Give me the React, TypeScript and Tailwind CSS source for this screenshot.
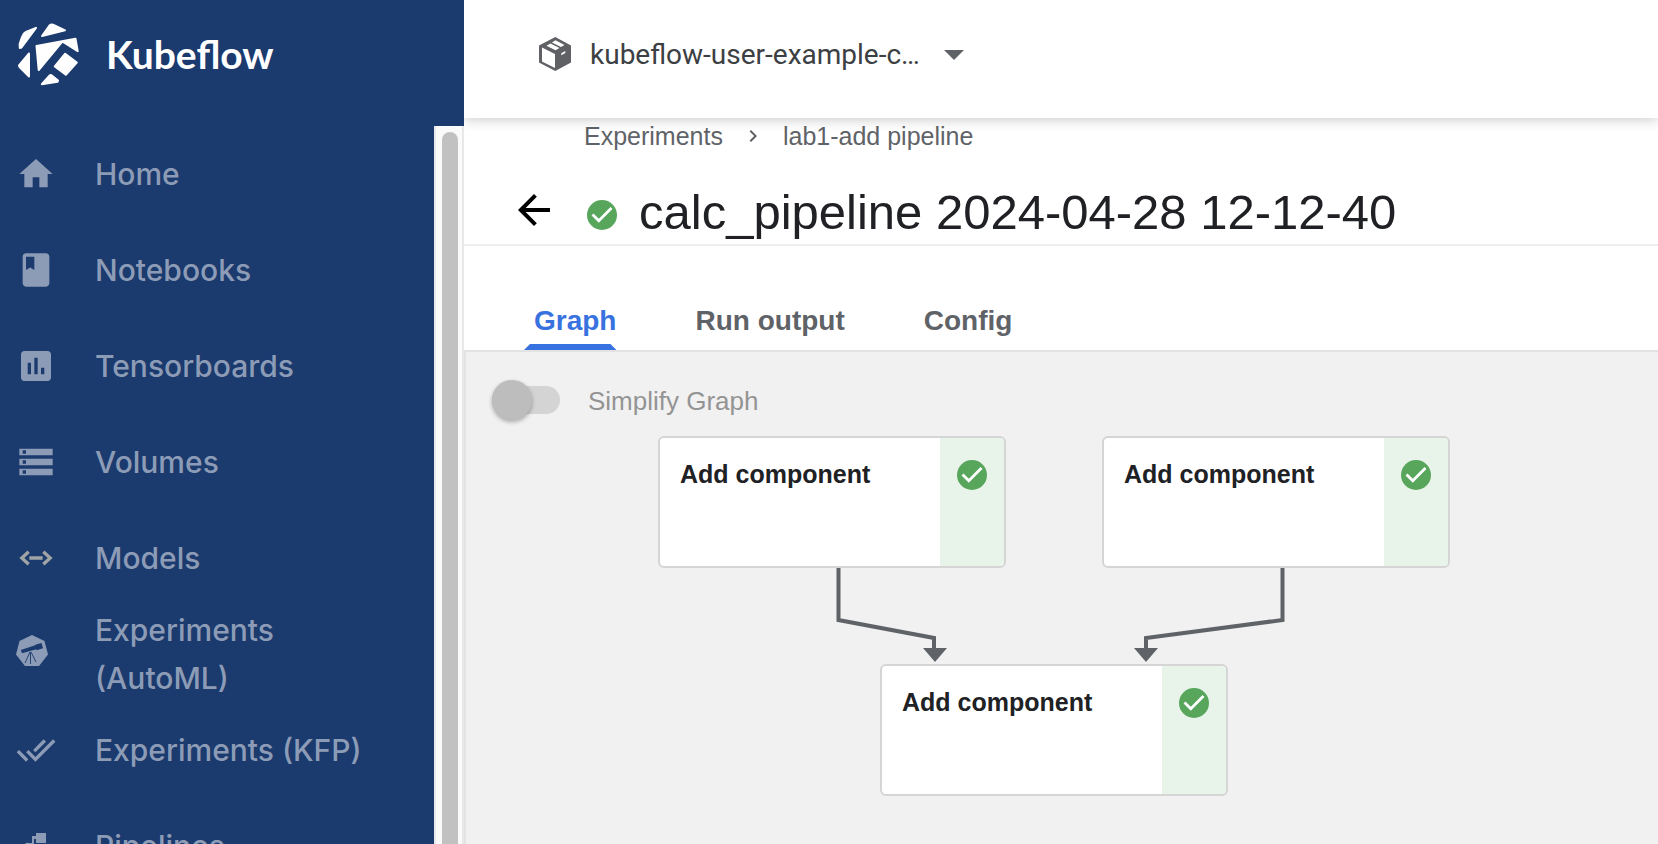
import type { ReactNode } from "react";
import { MdHome, MdBook, MdAssessment, MdStorage, MdDoneAll, MdArrowBack, MdChevronRight, MdArrowDropDown } from "react-icons/md";

function KubeflowMark() {
  return (
    <svg viewBox="0 0 62 64" className="h-16 w-[62px] shrink-0" fill="#fff" stroke="#fff" strokeWidth="2" strokeLinejoin="round" aria-hidden="true">
      <path d="M2.800 26 2.600 22 5 15Q6 11.500 9 10L19 5.800 4.500 25.500z" />
      <path d="M25 14 32.500 3.500Q34 2 36 2.600L48 8.300z" />
      <path d="M19.500 24 58.500 16.700 60.700 29.200 45.300 19.500 21.700 48z" />
      <path d="M2 43.500 12 31.500V54.500L2.500 45z" />
      <path d="M48.200 31.700 59.800 40.500 48.800 52.800 37.800 44.500z" />
      <path d="M24.800 62.200 32.500 53.600Q33.500 52.700 34.500 53.200L41 58.500 40.500 59.800z" />
    </svg>
  );
}

function ModelsIcon() {
  return (
    <svg viewBox="0 0 24 24" className="size-10" fill="none" stroke="#9fa4a4" strokeWidth="2" aria-hidden="true">
      <path d="M7.600 8.200 3.500 12l4.100 3.800M16.400 8.200l4.100 3.800-4.100 3.800M8 12h8" />
    </svg>
  );
}

function KatibIcon() {
  return (
    <svg viewBox="0 0 32 32" className="size-8" aria-hidden="true">
      <path fill="currentColor" d="M16 0 28.500 6 32 19.500 23 31H9L0 19.500 3.500 6z" />
      <path fill="#1b3a6e" d="M4.800 15 18.500 10.500 20 9.500 25.500 8 27 13.200 21.500 15 19.500 14.500 6 18.200z" />
      <path fill="none" stroke="#1b3a6e" strokeWidth="0.900" d="M14 17 9 28M14.500 17v12M15 17l5 10" />
    </svg>
  );
}

function PipelinesIcon() {
  return (
    <svg viewBox="0 0 40 40" className="size-10" fill="currentColor" aria-hidden="true">
      <path d="M20 7h10v10H20v-4h-2v14h2v-4h10v10H20v-4h-4V18h-1a5 5 0 1 1-2-1h3v-7h4z" />
    </svg>
  );
}

function PackageIcon() {
  return (
    <svg viewBox="0 0 32 34" className="h-[34px] w-8" fill="#5f6164" aria-hidden="true">
      <path
        fillRule="evenodd"
        d="M16.300 0 32 8.500v17L16.300 34 0 25.500v-17zM3 10.500v14L16 31V17zM7.500 8.700l9 4.500 4-2.200-9-4.500zM13 5.500l9 4.500 3.500-2-9-4.800zM22.300 16.300v2l4-2.200v-2z"
      />
    </svg>
  );
}

function Success() {
  return (
    <svg viewBox="0 0 30 30" className="size-[30px] shrink-0" role="img" aria-label="Succeeded">
      <circle cx="15" cy="15" r="15" fill="#57a65c" />
      <path d="M5.500 14.500 11.800 20.800 24.500 8" fill="none" stroke="#fff" strokeWidth="2.800" />
    </svg>
  );
}

const navItems: { label: string; icon: ReactNode; custom?: boolean }[] = [
  { label: "Home", icon: <MdHome className="size-10" /> },
  { label: "Notebooks", icon: <MdBook className="size-10" /> },
  { label: "Tensorboards", icon: <MdAssessment className="size-10" /> },
  { label: "Volumes", icon: <MdStorage className="size-10" /> },
  { label: "Models", icon: <ModelsIcon /> },
  { label: "Experiments (AutoML)", icon: <KatibIcon />, custom: true },
  { label: "Experiments (KFP)", icon: <MdDoneAll className="size-10" /> },
  { label: "Pipelines", icon: <PipelinesIcon /> },
];

function Sidebar() {
  return (
    <aside className="flex w-[464px] shrink-0 flex-col bg-[#1b3a6e]">
      <div className="flex h-[126px] shrink-0 items-start gap-[27px] pt-[22px] pl-[17px]">
        <KubeflowMark />
        <span className="font-['Lato',sans-serif] text-[39px] leading-[64px] font-bold text-white">Kubeflow</span>
      </div>
      <div className="flex min-h-0 flex-1">
        <nav className="min-w-0 flex-1 overflow-y-auto [scrollbar-width:none]">
          {navItems.map((item) => (
            <a
              key={item.label}
              href="#"
              className="flex h-24 items-center gap-[39px] pl-4 font-['Inter',sans-serif] text-[30px] leading-[48px] font-medium text-[#8d9cb6]"
            >
              <span className={item.custom ? "flex w-10 shrink-0 pb-1.5" : "flex w-10 shrink-0"}>{item.icon}</span>
              <span className={item.custom ? "w-52" : ""}>{item.label}</span>
            </a>
          ))}
        </nav>
        <div className="flex w-[30px] flex-col border-x-2 border-[#e8e8e8] bg-[#fafafa] pt-1.5 pl-1.5">
          <div className="w-4 flex-1 rounded-t-full bg-[#c1c1c1]" />
        </div>
      </div>
    </aside>
  );
}

function Node({ className }: { className: string }) {
  return (
    <button className={"absolute flex h-[132px] w-[348px] overflow-hidden rounded-md border-2 border-[#d5d5d5] bg-white text-left " + className}>
      <span className="flex-1 pt-5 pl-5 text-[25px] leading-8 font-bold text-[#202124]">Add component</span>
      <span className="flex h-full w-16 justify-center bg-[#e8f3ea] pt-[22px]">
        <Success />
      </span>
    </button>
  );
}

function Graph() {
  return (
    <div className="relative min-h-0 flex-1 overflow-hidden border-t-2 border-l-2 border-[#e3e3e3] bg-[#f1f1f1]">
      <label className="flex items-start gap-7 pt-7 pl-[26px] text-[26px] leading-[42px] text-[#949494]">
        <span className="relative flex h-10 w-[68px] items-center">
          <input type="checkbox" role="switch" className="peer absolute inset-0 appearance-none" />
          <span className="h-7 w-full rounded-full bg-[#d4d4d4]" />
          <span className="absolute left-0 size-10 rounded-full bg-[#bdbdbd] shadow-[0_2px_4px_rgba(0,0,0,0.3)]" />
        </span>
        Simplify Graph
      </label>
      <svg viewBox="0 0 900 460" className="absolute top-0 left-0 h-[460px] w-[900px]" aria-hidden="true">
        <g fill="none" stroke="#5f6368" strokeWidth="4">
          <path d="M372.500 214V268L468 286V300" />
          <path d="M816.500 214V268L680 286V300" />
        </g>
        <path fill="#5f6368" d="M457 296h24l-12 14zM668 296h24l-12 14z" />
      </svg>
      <Node className="top-[84px] left-[192px]" />
      <Node className="top-[84px] left-[636px]" />
      <Node className="top-[312px] left-[414px]" />
    </div>
  );
}

export default function App() {
  return (
    <div className="flex h-screen overflow-hidden bg-white font-['Liberation_Sans',Arial,sans-serif]">
      <Sidebar />
      <main className="flex min-w-0 flex-1 flex-col overflow-hidden">
        <header className="z-10 flex h-[118px] shrink-0 items-center bg-white pb-2.5 pl-[75px] shadow-[0_2px_12px_rgba(0,0,0,0.2)]">
          <button className="flex items-center font-['Roboto',sans-serif] text-[28px] text-[#3c4043]">
            <PackageIcon />
            <span className="pt-0.5 pl-[19px] leading-9">kubeflow-user-example-c…</span>
            <MdArrowDropDown className="ml-2.5 size-12 text-[#5f6368]" />
          </button>
        </header>
        <nav aria-label="Breadcrumb" className="flex h-9 shrink-0 items-center pl-[120px] text-[25px] leading-8 text-[#5f6368]">
          <a href="#">Experiments</a>
          <MdChevronRight className="mx-[18px] size-6" />
          <a href="#">lab1-add pipeline</a>
        </nav>
        <div className="flex h-[92px] shrink-0 items-end border-b-2 border-[#eee] pl-[46px]">
          <button aria-label="Back" className="mr-[29px] pb-2.5 text-black">
            <MdArrowBack className="size-12" />
          </button>
          <span className="pb-3.5">
            <Success />
          </span>
          <h1 className="pb-1 pl-[22px] text-[49px] leading-[56px] text-[#202124]">calc_pipeline 2024-04-28 12-12-40</h1>
        </div>
        <div role="tablist" className="flex h-[104px] shrink-0 items-end gap-[69px] pl-[60px] text-[28px] leading-8 font-bold text-[#5f6368]">
          <button role="tab" aria-selected="true" className="text-[#3871e0]">
            <span className="block pb-[7px] pl-2.5">Graph</span>
            <span className="block h-1.5 bg-[#3871e0] [clip-path:polygon(6px_0,calc(100%-6px)_0,100%_100%,0_100%)]" />
          </button>
          <button role="tab" aria-selected="false" className="pb-[13px] pl-2.5">Run output</button>
          <button role="tab" aria-selected="false" className="pb-[13px] pl-2.5">Config</button>
        </div>
        <Graph />
      </main>
    </div>
  );
}
